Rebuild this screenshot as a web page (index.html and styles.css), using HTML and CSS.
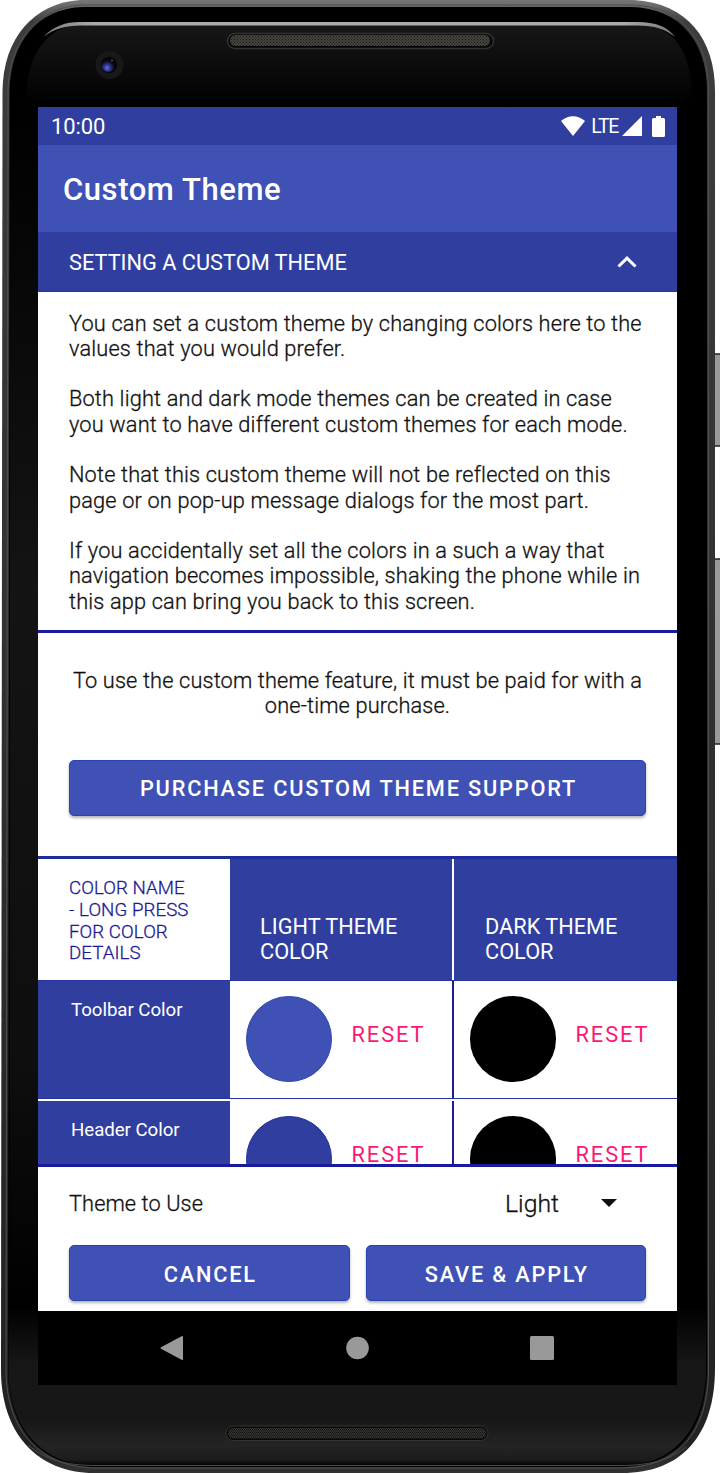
FILE: index.html
```html
<!DOCTYPE html>
<html lang="en">
<head>
<meta charset="utf-8">
<title>Custom Theme</title>
<link rel="stylesheet" href="styles.css">
</head>
<body>
<div class="phone">
  <svg class="device" viewBox="0 0 720 1474" aria-hidden="true">
    <defs>
      <linearGradient id="rim" x1="0" y1="0" x2="0" y2="1"><stop offset="0" stop-color="#777977"/><stop offset=".015" stop-color="#3c3d3d"/><stop offset=".98" stop-color="#222"/><stop offset="1" stop-color="#333"/></linearGradient>
      <linearGradient id="glass" x1="0" y1="0" x2="0" y2="1"><stop offset="0" stop-color="#171717"/><stop offset=".85" stop-color="#040404"/><stop offset="1" stop-color="#000"/></linearGradient>
      <linearGradient id="chin" x1="0" y1="0" x2="0" y2="1"><stop offset="0" stop-color="#020202"/><stop offset=".35" stop-color="#171717"/><stop offset=".7" stop-color="#171717"/><stop offset=".87" stop-color="#242424"/><stop offset=".96" stop-color="#1c1c1c"/><stop offset="1" stop-color="#000"/></linearGradient>
      <linearGradient id="side" x1="0" y1="0" x2="0" y2="1"><stop offset="0" stop-color="#000"/><stop offset=".4" stop-color="#141414"/><stop offset=".8" stop-color="#0e0e0e"/><stop offset="1" stop-color="#000"/></linearGradient>
      <linearGradient id="shine" x1="0" y1="0" x2="1" y2="0"><stop offset="0" stop-color="#777"/><stop offset=".08" stop-color="#aaa"/><stop offset=".92" stop-color="#aaa"/><stop offset="1" stop-color="#777"/></linearGradient>
      <radialGradient id="lens" cx=".4" cy=".7" r=".6"><stop offset="0" stop-color="#6670e0"/><stop offset=".35" stop-color="#303a96"/><stop offset=".8" stop-color="#0a0a1c"/><stop offset="1" stop-color="#050505"/></radialGradient>
      <pattern id="mesh" width="3" height="3" patternUnits="userSpaceOnUse"><rect width="3" height="3" fill="#45433c"/><path d="M0 0h1v1H0zM1.5 1.5h1v1h-1z" fill="#191917"/></pattern>
      <pattern id="mesh2" width="4" height="3" patternUnits="userSpaceOnUse"><rect width="4" height="3" fill="#0c0c0b"/><path d="M0 0l2 1.5L0 3M2 0l2 1.5L2 3" fill="none" stroke="#484640" stroke-width=".8"/></pattern>
    </defs>
    <rect x="713" y="354" width="10" height="92" rx="2" fill="#9a9a9a" stroke="#222" stroke-width="1.5"/>
    <rect x="713" y="559" width="10" height="185" rx="2" fill="#9a9a9a" stroke="#222" stroke-width="1.5"/>
    <path d="M80 0H634C687 3 715 39 715 91V1368C715 1436 681 1473 622 1473H94C38 1473 1 1434 1 1370L2.500 91C3 38 34 3 80 0Z" fill="url(#rim)"/>
    <path d="M83 5H631C681 6 708.500 39 708.500 91V1368C708.500 1433 678 1468 620 1468H96C41 1468 6 1431 6 1370L8 91C9 42 37 6 83 5Z" fill="none" stroke="#505050" stroke-width="1"/>
    <path d="M83 7H631C681 8 707 43 707 91V1368C707 1432 675 1467 620 1467H96C42 1467 8 1430 8 1370L9.500 91C10 43 38 8 83 7Z" fill="#000"/>
    <path d="M78 24H640C670 27 690 44 692 94L677 107H38L27 94C27 53 48 28 78 24Z" fill="url(#glass)"/>
    <path d="M43 37C54 26 65 22 80 22H637C656 22 668 27 675 37C665 29 654 25.500 638 25.500H80C66 25.500 54 29 43 37Z" fill="url(#shine)"/>
    <rect x="10" y="100" width="28" height="1210" fill="url(#side)"/>
    <path d="M8.500 1310H706V1370C705 1428 674 1466 620 1466H96C43 1466 8.500 1428 8.500 1370Z" fill="url(#chin)"/>
    <path d="M28 1445C46 1460 66 1465.500 96 1465.500H620C650 1465.500 670 1460 686 1447" fill="none" stroke="#4c4c4c"/>
    <rect x="227.500" y="33.500" width="266" height="15" rx="7.500" fill="#060606" stroke="#343434" stroke-width="1.500"/>
    <rect x="230" y="35" width="260" height="11" rx="5.500" fill="url(#mesh)"/>
    <circle cx="109.500" cy="65" r="14" fill="#181818"/>
    <circle cx="109" cy="65" r="8" fill="#050505"/>
    <circle cx="108.500" cy="65" r="7" fill="url(#lens)"/>
    <circle cx="112" cy="60.500" r="1" fill="#55513c"/>
    <rect x="226" y="1426" width="262" height="14.500" rx="7.250" fill="#090909" stroke="#343434"/>
    <rect x="228" y="1428" width="258" height="10.500" rx="5" fill="url(#mesh2)"/>
  </svg>

  <main class="screen">
    <div class="status">
      <span class="clock">10:00</span>
      <svg class="wifi" viewBox="0 0 24 20"><path d="M0 5C7-1.500 17-1.500 24 5L12 20Z" fill="#fff"/></svg>
      <span class="lte">LTE</span>
      <svg class="signal" viewBox="0 0 20 20"><path d="M0 20L20 0V20Z" fill="#fff"/></svg>
      <svg class="battery" viewBox="0 0 13 21"><path d="M4 0H9V2H11.500Q13 2 13 3.500V19.500Q13 21 11.500 21H1.500Q0 21 0 19.500V3.500Q0 2 1.500 2H4Z" fill="#fff"/></svg>
    </div>
    <header class="toolbar"><h1>Custom Theme</h1></header>
    <div class="section-head">
      <span>SETTING A CUSTOM THEME</span>
      <svg class="chevron" viewBox="0 0 20 12"><path d="M1.500 10.500L10 2.200L18.500 10.500" fill="none" stroke="#fff" stroke-width="3"/></svg>
    </div>
    <section class="info">
      <p>You can set a custom theme by changing colors here to the<br>values that you would prefer.</p>
      <p>Both light and dark mode themes can be created in case<br>you want to have different custom themes for each mode.</p>
      <p>Note that this custom theme will not be reflected on this<br>page or on pop-up message dialogs for the most part.</p>
      <p>If you accidentally set all the colors in a such a way that<br>navigation becomes impossible, shaking the phone while in<br>this app can bring you back to this screen.</p>
    </section>
    <section class="purchase">
      <p>To use the custom theme feature, it must be paid for with a<br>one-time purchase.</p>
      <button class="btn">PURCHASE CUSTOM THEME SUPPORT</button>
    </section>
    <section class="colors">
      <div class="row head">
        <div class="name">COLOR NAME<br>- LONG PRESS<br>FOR COLOR<br>DETAILS</div>
        <div class="cell">LIGHT THEME<br>COLOR</div>
        <div class="cell">DARK THEME<br>COLOR</div>
      </div>
      <div class="row">
        <div class="name">Toolbar Color</div>
        <div class="cell"><span class="swatch toolbar-color"></span><span class="reset">RESET</span></div>
        <div class="cell"><span class="swatch black"></span><span class="reset">RESET</span></div>
      </div>
      <div class="row">
        <div class="name">Header Color</div>
        <div class="cell"><span class="swatch header-color"></span><span class="reset">RESET</span></div>
        <div class="cell"><span class="swatch black"></span><span class="reset">RESET</span></div>
      </div>
    </section>
    <footer class="actions">
      <div class="theme-choice">
        <span class="label">Theme to Use</span>
        <span class="value">Light</span>
        <svg class="caret" viewBox="0 0 16 8"><path d="M0 0H16L8 8Z" fill="#111"/></svg>
      </div>
      <div class="buttons">
        <button class="btn">CANCEL</button>
        <button class="btn">SAVE &amp; APPLY</button>
      </div>
    </footer>
    <nav class="nav">
      <svg viewBox="0 0 24 26"><path d="M21.500 1.200L1 12.200Q0 13 1 13.800L21.500 24.800Q23 25.500 23 24V2Q23 .5 21.500 1.200Z" fill="#999"/></svg>
      <svg viewBox="0 0 24 26"><circle cx="12.500" cy="13" r="11.300" fill="#999"/></svg>
      <svg viewBox="0 0 24 26"><rect y="1" width="24" height="24" rx="1.500" fill="#999"/></svg>
    </nav>
  </main>
</div>
</body>
</html>
```
FILE: styles.css
```css
* { box-sizing: border-box; }
body { margin: 0; background: #fff; font-family: Roboto, "Liberation Sans", sans-serif; }
h1, p { margin: 0; }
.phone { position: relative; width: 720px; height: 1474px; overflow: hidden; padding: 107px 43px 0 38px; }
.device { position: absolute; left: 0; top: 0; width: 720px; height: 1474px; }
.screen { position: relative; width: 639px; height: 1278px; display: flex; flex-direction: column; background: #fff; overflow: hidden; color: #111; }
.status { height: 37.500px; flex: none; display: flex; align-items: center; background: #303f9f; color: #fff; padding: 1px 12px 0 13px; }
.clock { font-size: 22px; letter-spacing: -.1px; margin-right: auto; padding-top: 1px; }
.wifi { width: 24px; height: 20px; }
.lte { font-size: 19.500px; letter-spacing: -1.300px; margin: 0 4px 0 6px; }
.signal { width: 20px; height: 20px; }
.battery { width: 13px; height: 21px; margin-left: 10px; }
.toolbar { height: 87px; flex: none; background: #3f51b5; color: #fff; padding: 0 25px; display: flex; align-items: center; }
.toolbar h1 { font-size: 31px; font-weight: 500; line-height: 36px; letter-spacing: .57px; padding-top: 3px; }
.section-head { height: 60px; flex: none; display: flex; align-items: center; justify-content: space-between; background: #303f9f; border-bottom: 1px solid #2533a0; color: #fff; padding: 2px 40px 0 31px; font-size: 21.750px; }
.chevron { width: 20px; height: 12px; }
.info, .purchase p, .label, .value, .row.head .name { font-weight: 300; -webkit-text-stroke: .3px currentColor; }
.info { height: 341.500px; flex: none; padding: 19px 31px 0; border-bottom: 3px solid #1a1aa0; font-size: 21.750px; line-height: 25.300px; letter-spacing: .165px; white-space: nowrap; }
.info p + p { margin-top: 25.300px; }
.purchase { height: 223px; flex: none; padding: 35px 31px 0; font-size: 21.750px; line-height: 25.300px; letter-spacing: .145px; text-align: center; white-space: nowrap; }
.btn { display: block; border: 1px solid #2a43b4; border-radius: 5px; background: #3f51b5; color: #fff; height: 56px; padding: 2px 0 0 2px; font: 500 21.750px/1 Roboto, sans-serif; letter-spacing: 1.820px; box-shadow: 0 2px 3px rgba(0,0,0,.3); }
.purchase .btn { width: 577px; margin-top: 41px; }
.colors { height: 311px; flex: none; overflow: hidden; border-top: 3px solid #1d2d99; border-bottom: 3px solid #1a1aa0; }
.row { display: grid; grid-template-columns: 192px 222px 225px; height: 118px; margin-bottom: 2px; border-bottom: 1px solid #2533a0; }
.row.head { height: 122px; margin: 0; }
.row .name { background: #303f9f; color: #fff; font-size: 18.700px; letter-spacing: -.05px; line-height: 22px; padding: 18px 0 0 33px; }
.row.head .name { background: #fff; color: #1a1a94; padding: 19px 0 0 31px; line-height: 21.800px; letter-spacing: .07px; }
.row .cell { display: flex; padding: 15px 0 0 16px; }
.row .cell + .cell { border-left: 2px solid #1d1d91; padding-left: 16px; }
.row.head .cell { display: block; background: #303f9f; color: #fff; font-size: 21.750px; line-height: 25.300px; padding: 55px 0 0 30px; }
.row.head .cell + .cell { border-left: 2px solid #fff; padding-left: 31px; }
.swatch { width: 85.500px; height: 85.500px; border-radius: 50%; flex: none; }
.toolbar-color { background: #3f51b5; border: 1px solid #2a43b4; }
.header-color { background: #303f9f; border: 1px solid #1d2d99; }
.black { background: #000; }
.reset { color: #fb1776; font-size: 21.750px; line-height: 26px; letter-spacing: 1.950px; margin: 26px 0 0 20px; }
.actions { height: 144px; flex: none; padding: 0 31px; }
.theme-choice { height: 78px; display: flex; align-items: center; padding: 0 29px 6px 0; }
.label { font-size: 21.750px; letter-spacing: .1px; margin-right: auto; padding-top: 1px; }
.value { font-size: 24.800px; }
.caret { width: 16px; height: 8px; margin-left: 42px; }
.buttons { display: grid; grid-template-columns: 1fr 1fr; gap: 16px; }
.nav { flex: 1; background: #000; display: flex; justify-content: space-between; padding: 24px 123px 0 122px; }
.nav svg { width: 24px; height: 26px; }
.buttons .btn { padding-top: 3px; }
```
